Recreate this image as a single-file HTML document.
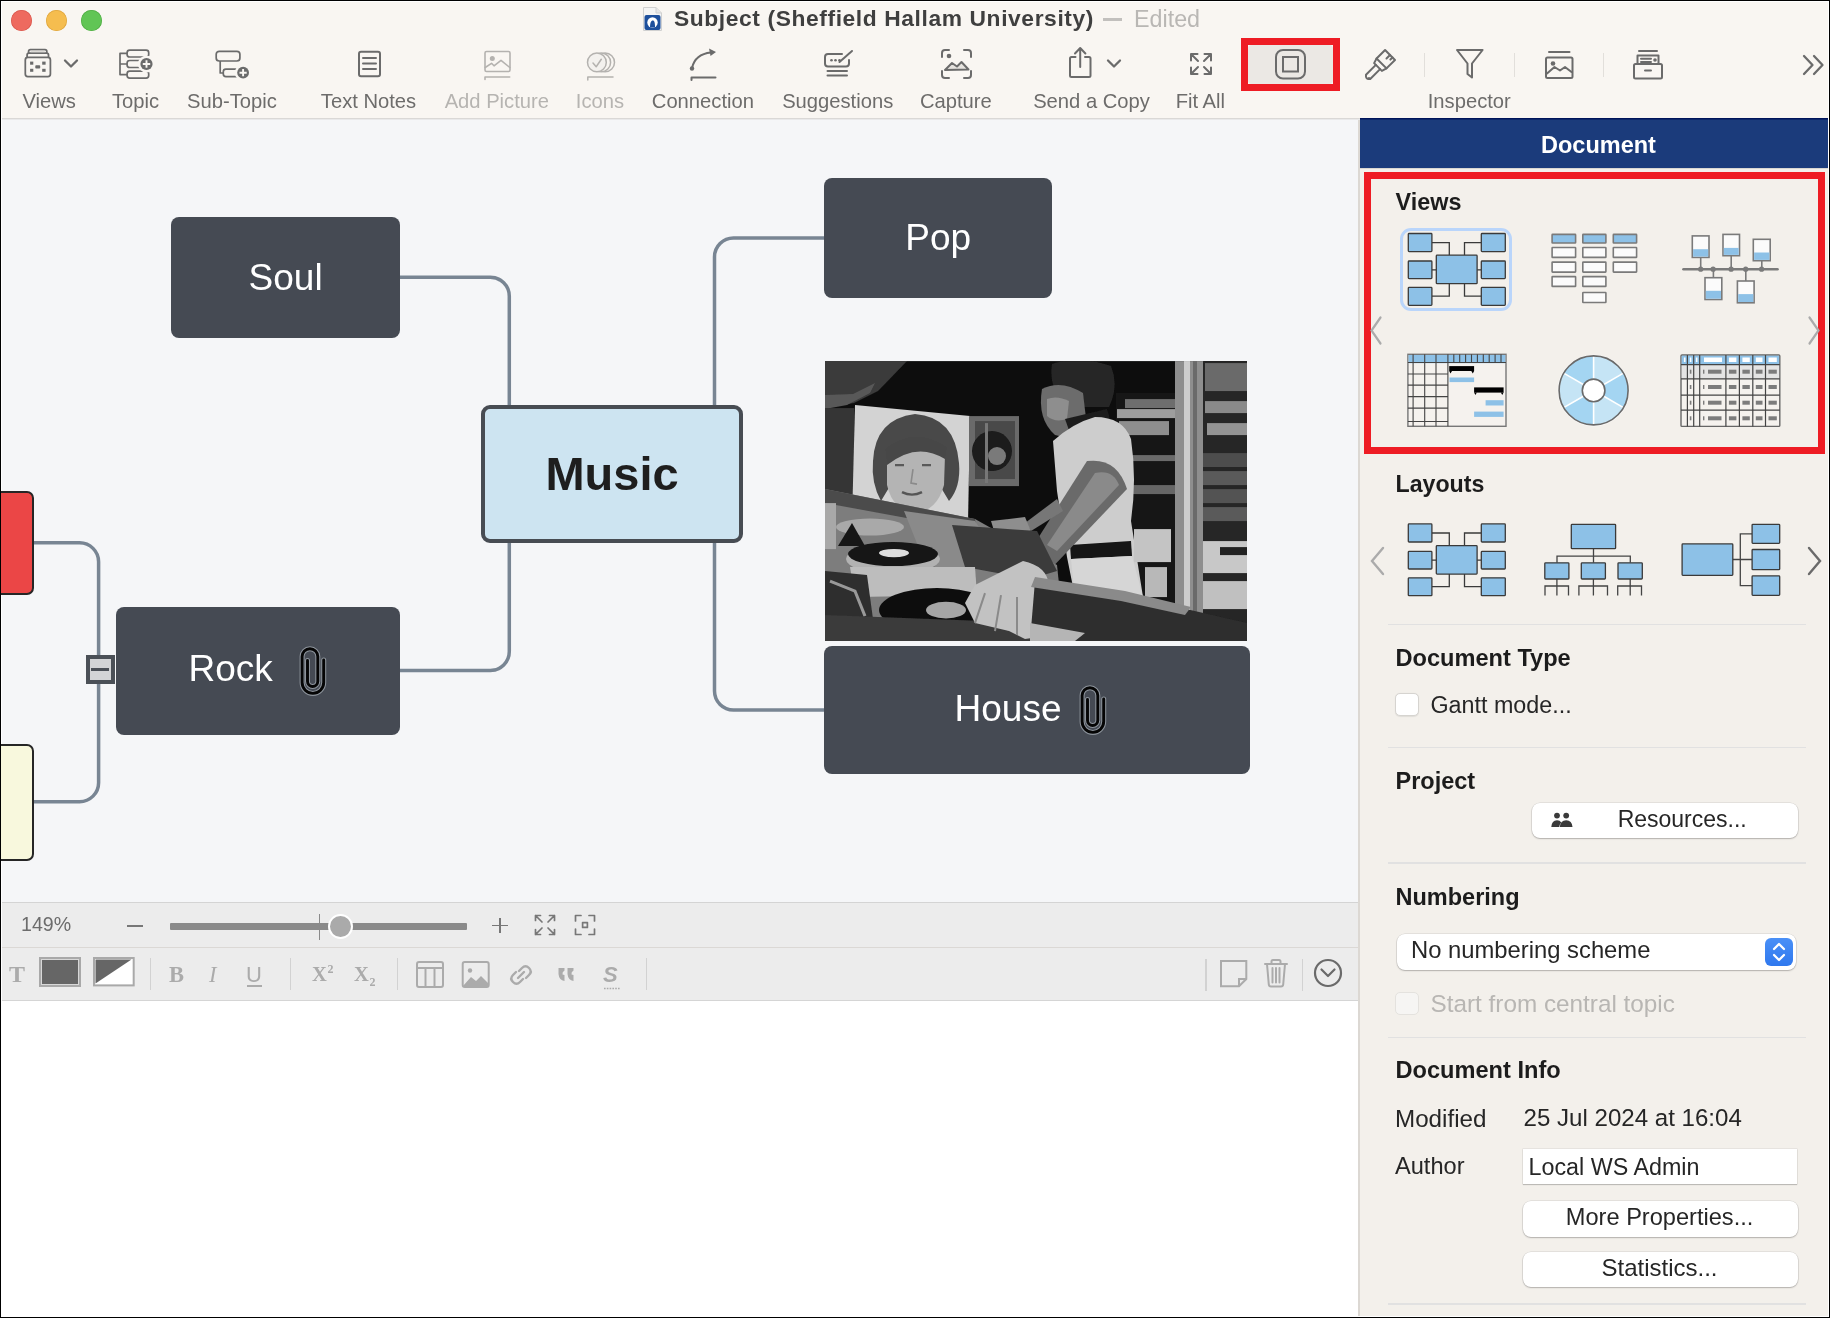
<!DOCTYPE html>
<html><head><meta charset="utf-8"><title>MindView</title>
<style>
html,body{margin:0;padding:0;}
body{width:1830px;height:1318px;overflow:hidden;background:#000;position:relative;font-family:"Liberation Sans",sans-serif;}
#win{position:absolute;left:1px;top:1px;width:1828px;height:1316px;background:#fff;overflow:hidden;}
#c{position:absolute;left:-1px;top:-1px;width:1830px;height:1318px;will-change:transform;}
</style></head><body><div id="win"><div id="c">
<div style="position:absolute;left:2px;top:2px;width:1826px;height:116px;background:#f9f6f2;"></div>
<div style="position:absolute;left:2px;top:118px;width:1826px;height:1px;background:#dad8d6;"></div>
<div style="position:absolute;left:2px;top:119px;width:1826px;height:1px;background:#e9e9ea;"></div>
<div style="position:absolute;left:10.6px;top:9.6px;width:21.2px;height:21.2px;border-radius:50%;background:#ee6a5f;box-shadow:inset 0 0 0 0.7px #d95a50;"></div>
<div style="position:absolute;left:45.7px;top:9.6px;width:21.2px;height:21.2px;border-radius:50%;background:#f5bd4f;box-shadow:inset 0 0 0 0.7px #dea640;"></div>
<div style="position:absolute;left:80.8px;top:9.6px;width:21.2px;height:21.2px;border-radius:50%;background:#61c555;box-shadow:inset 0 0 0 0.7px #52ad46;"></div>
<svg style="position:absolute;left:642px;top:6px;" width="21" height="26" viewBox="0 0 21 26"><path d="M1.5 1.5 H14 L19.5 7 V24.5 H1.5 Z" fill="#f4f4f4" stroke="#d0d0d0" stroke-width="1"/><path d="M14 1.5 V7 H19.5" fill="#e6e6e6" stroke="#d0d0d0" stroke-width="1"/><rect x="2.5" y="9" width="16" height="15" rx="2" fill="#1d4f9c"/><circle cx="10.5" cy="16.5" r="5.2" fill="#fff"/><path d="M8 21.5 C8 17 9 14.5 10.8 14.5 C12.5 14.5 13 17 13 21.5 Z" fill="#1d4f9c"/></svg>
<div style="position:absolute;top:6.27px;font-size:22.8px;line-height:25.47px;color:#3f3f3f;font-weight:700;white-space:pre;font-family:'Liberation Sans', sans-serif;letter-spacing:0.6px;left:674.00px;">Subject (Sheffield Hallam University)</div>
<div style="position:absolute;left:1102.6px;top:18.2px;width:19.4px;height:2.4px;background:#c2c0bd;"></div>
<div style="position:absolute;top:5.71px;font-size:23.3px;line-height:26.03px;color:#b9b7b4;font-weight:400;white-space:pre;font-family:'Liberation Sans', sans-serif;left:1134.00px;">Edited</div>
<svg style="position:absolute;left:20px;top:44px;" width="36" height="38" viewBox="0 0 36 38"><g stroke="#6b6b6b" stroke-width="1.75" fill="none" stroke-linejoin="round"><rect x="5.3" y="13.4" width="25.1" height="19.2" rx="2.5"/><path d="M7.1 13.4 V11 Q7.1 9.2 8.9 9.2 H26.7 Q28.5 9.2 28.5 11 V13.4"/><path d="M8.6 9.2 V7.3 Q8.6 5.5 10.4 5.5 H25 Q26.8 5.5 26.8 7.3 V9.2"/></g><rect x="10.6" y="6.6" width="14.2" height="1.6" fill="#dcdad6"/><g fill="#6b6b6b"><rect x="10.1" y="17.6" width="3.2" height="3.1"/><rect x="22.2" y="17.6" width="3.4" height="3.1"/><rect x="10.1" y="24.8" width="3.2" height="3"/><rect x="22.2" y="24.8" width="3.4" height="3"/><rect x="15.3" y="21.2" width="4.9" height="3.3" rx="0.8"/></g></svg>
<svg style="position:absolute;left:62px;top:57px;" width="18" height="14" viewBox="0 0 18 14"><path d="M3 3.5 L9 9.5 L15 3.5" stroke="#6b6b6b" stroke-width="2.3" fill="none" stroke-linecap="round" stroke-linejoin="round"/></svg>
<svg style="position:absolute;left:117px;top:47px;" width="38" height="34" viewBox="0 0 38 34"><g stroke="#6b6b6b" stroke-width="1.7" fill="none" stroke-linejoin="round"><rect x="10.1" y="3.1" width="21.6" height="6.9" rx="2.6"/><rect x="10.1" y="13.5" width="21" height="7" rx="2.6"/><rect x="10.1" y="24.1" width="21.6" height="7" rx="2.6"/><path d="M10.1 6.4 H3 V27.6 H10.1 M3 17 H10.1"/></g><circle cx="29.5" cy="17" r="8.6" fill="#f9f6f2"/><circle cx="29.5" cy="17" r="6.1" fill="#6b6b6b"/><path d="M29.5 13.3 V20.7 M25.8 17 H33.2" stroke="#f9f6f2" stroke-width="1.9"/></svg>
<svg style="position:absolute;left:212px;top:47px;" width="38" height="34" viewBox="0 0 38 34"><g stroke="#6b6b6b" stroke-width="1.7" fill="none" stroke-linejoin="round"><rect x="4.2" y="4.3" width="23.7" height="9.7" rx="3"/><path d="M8.2 14 V26 H11.3"/><rect x="11.3" y="22.2" width="20" height="7.4" rx="2.6"/></g><circle cx="31.1" cy="25.7" r="8.3" fill="#f9f6f2"/><circle cx="31.1" cy="25.7" r="5.9" fill="#6b6b6b"/><path d="M31.1 22.1 V29.3 M27.5 25.7 H34.7" stroke="#f9f6f2" stroke-width="1.9"/></svg>
<svg style="position:absolute;left:356px;top:49px;" width="27" height="30" viewBox="0 0 27 30"><g stroke="#6b6b6b" stroke-width="2" fill="none" stroke-linecap="round" stroke-linejoin="round"><rect x="3" y="2.8" width="21" height="24.5" rx="2"/><path d="M7 9 H20 M7 14.5 H20 M7 20 H20"/></g></svg>
<svg style="position:absolute;left:482px;top:49px;" width="31" height="33" viewBox="0 0 31 33"><g stroke="#b4b2af" stroke-width="1.6" fill="none" stroke-linecap="round" stroke-linejoin="round"><rect x="3" y="2.5" width="25" height="20" rx="1.5"/><path d="M3.2 18.5 L9.5 14.3 L12 16.8 L19 11.3 L27.8 18.5"/><path d="M3 30.5 V28 H27.7"/></g><circle cx="10.3" cy="9.4" r="2.5" fill="#b4b2af"/></svg>
<svg style="position:absolute;left:585px;top:49px;" width="32" height="33" viewBox="0 0 32 33"><g stroke="#b4b2af" stroke-width="1.5" fill="none" stroke-linecap="round" stroke-linejoin="round"><circle cx="20.1" cy="13.4" r="9.4"/><circle cx="16.2" cy="13.4" r="9.4" fill="#f9f6f2"/><circle cx="11.9" cy="13.4" r="9.4" fill="#f3f1ee"/><path d="M8 14 L11.2 17.7 L16.3 10.3"/><path d="M2.8 31 V28 H28"/></g></svg>
<svg style="position:absolute;left:687px;top:47px;" width="33" height="36" viewBox="0 0 33 36"><g stroke="#6b6b6b" stroke-width="2" fill="none" stroke-linecap="round" stroke-linejoin="round"><path d="M5 21 C7 12 14 6.5 24 5.5"/><path d="M4.5 33 V30.5 H28.5"/></g><circle cx="5" cy="21.5" r="2.2" fill="#6b6b6b"/><path d="M29 5 L22 1.5 L23.5 9 Z" fill="#6b6b6b"/></svg>
<svg style="position:absolute;left:822px;top:48px;" width="34" height="31" viewBox="0 0 34 31"><g stroke="#6b6b6b" stroke-width="2" fill="none" stroke-linecap="round" stroke-linejoin="round"><path d="M20 6 H6 Q3 6 3 9 V15.5 Q3 18.5 6 18.5 H24 Q27 18.5 27 15.5 V12"/><path d="M17.5 14 L30 3"/><path d="M5.5 23 H25 M5.5 27.5 H25"/></g><g fill="#6b6b6b"><circle cx="9.5" cy="12.3" r="1.3"/><circle cx="13.5" cy="12.3" r="1.3"/><circle cx="17.5" cy="12.3" r="1.3"/></g></svg>
<svg style="position:absolute;left:939px;top:47px;" width="35" height="34" viewBox="0 0 35 34"><g stroke="#6b6b6b" stroke-width="2" fill="none" stroke-linecap="round" stroke-linejoin="round"><path d="M3 10 V6 Q3 3 6 3 H10 M25 3 H29 Q32 3 32 6 V10 M32 24 V28 Q32 31 29 31 H25 M10 31 H6 Q3 31 3 28 V24"/><path d="M6 23 L13 16 L18 19.5 L22.5 15 L29.5 22.5 Z" fill="#e6e3df"/></g><circle cx="10" cy="9" r="2.3" fill="#6b6b6b"/></svg>
<svg style="position:absolute;left:1067px;top:45px;" width="28" height="35" viewBox="0 0 28 35"><g stroke="#6b6b6b" stroke-width="2" fill="none" stroke-linecap="round" stroke-linejoin="round"><path d="M8.5 12 H4.5 Q3 12 3 13.5 V30.5 Q3 32 4.5 32 H22 Q23.5 32 23.5 30.5 V13.5 Q23.5 12 22 12 H18"/><path d="M13.2 22 V3.5 M8 8.5 L13.2 3 L18.4 8.5"/></g></svg>
<svg style="position:absolute;left:1105px;top:57px;" width="18" height="14" viewBox="0 0 18 14"><path d="M3 3.5 L9 9.5 L15 3.5" stroke="#6b6b6b" stroke-width="2.3" fill="none" stroke-linecap="round" stroke-linejoin="round"/></svg>
<svg style="position:absolute;left:1188px;top:51px;" width="26" height="26" viewBox="0 0 26 26"><g stroke="#6b6b6b" stroke-width="2" fill="none" stroke-linecap="round" stroke-linejoin="round"><path d="M3 3 L10 10 M3 3 H9.5 M3 3 V9.5"/><path d="M23 3 L16 10 M23 3 H16.5 M23 3 V9.5"/><path d="M3 23 L10 16 M3 23 H9.5 M3 23 V16.5"/><path d="M23 23 L16 16 M23 23 H16.5 M23 23 V16.5"/></g></svg>
<div style="position:absolute;left:1247.5px;top:45px;width:85px;height:39px;background:#ebe8e4;border-radius:4px;"></div>
<div style="position:absolute;left:1240.5px;top:38px;width:99px;height:53px;box-sizing:border-box;border:7px solid #ee1c24;"></div>
<svg style="position:absolute;left:1273px;top:47px;" width="35" height="34" viewBox="0 0 35 34"><g stroke="#6b6b6b" stroke-width="2" fill="none"><rect x="3" y="3" width="29" height="28.5" rx="7"/><rect x="10" y="10" width="15" height="14.5"/></g></svg>
<svg style="position:absolute;left:1360px;top:48px;" width="36" height="38" viewBox="0 0 36 38"><g transform="rotate(45 18 19)" stroke="#6b6b6b" stroke-width="2" fill="none" stroke-linejoin="round" stroke-linecap="round"><path d="M11 2 H25 V14 H11 Z"/><path d="M11 14 L12.5 19 H23.5 L25 14"/><path d="M15 19 V33 Q18 37 21 33 V19"/><path d="M18 2 V7 M21.5 2 V5"/></g><circle cx="9" cy="30.5" r="1.5" fill="#6b6b6b"/></svg>
<div style="position:absolute;left:1424.1px;top:52.5px;width:1px;height:24px;background:#e2dfdb;"></div>
<div style="position:absolute;left:1513.5px;top:52.5px;width:1px;height:24px;background:#e2dfdb;"></div>
<div style="position:absolute;left:1603.1px;top:52.5px;width:1px;height:24px;background:#e2dfdb;"></div>
<svg style="position:absolute;left:1454px;top:47px;" width="32" height="34" viewBox="0 0 32 34"><path d="M3 3 H28.6 L18 16.5 V30.5 L13.5 27 V16.5 Z" stroke="#6b6b6b" stroke-width="2" fill="none" stroke-linecap="round" stroke-linejoin="round"/></svg>
<svg style="position:absolute;left:1543px;top:49px;" width="32" height="32" viewBox="0 0 32 32"><g stroke="#6b6b6b" stroke-width="2" fill="none" stroke-linecap="round" stroke-linejoin="round"><rect x="3" y="8.5" width="26.5" height="20.5" rx="1.5"/><path d="M6 3 H26.5"/><path d="M4 24.5 L11.5 18 L17 21.5 L22 18 L28.5 23"/></g><circle cx="10" cy="14.5" r="2.3" fill="#6b6b6b"/></svg>
<svg style="position:absolute;left:1631px;top:48px;" width="34" height="33" viewBox="0 0 34 33"><g stroke="#6b6b6b" stroke-width="2" fill="none" stroke-linecap="round" stroke-linejoin="round"><path d="M6.5 16 V7.5 H27.5 V16"/><path d="M8 3 H26"/><rect x="3" y="16" width="28" height="14.5" rx="1.5"/><path d="M10 10.8 H20 M10 14 H20 M14 22.5 H20"/></g><circle cx="24" cy="12" r="1.8" fill="#6b6b6b"/></svg>
<svg style="position:absolute;left:1800px;top:52px;" width="26" height="26" viewBox="0 0 26 26"><g stroke="#6b6b6b" stroke-width="2.3" fill="none" stroke-linecap="round" stroke-linejoin="round"><path d="M4 4 L12.5 13 L4 22"/><path d="M14 4 L22.5 13 L14 22"/></g></svg>
<div style="position:absolute;top:89.62px;font-size:20.2px;line-height:22.56px;color:#6d6c6b;font-weight:400;white-space:pre;font-family:'Liberation Sans', sans-serif;left:-450.80px;width:1000px;text-align:center;">Views</div>
<div style="position:absolute;top:89.62px;font-size:20.2px;line-height:22.56px;color:#6d6c6b;font-weight:400;white-space:pre;font-family:'Liberation Sans', sans-serif;left:-364.40px;width:1000px;text-align:center;">Topic</div>
<div style="position:absolute;top:89.62px;font-size:20.2px;line-height:22.56px;color:#6d6c6b;font-weight:400;white-space:pre;font-family:'Liberation Sans', sans-serif;left:-268.00px;width:1000px;text-align:center;">Sub-Topic</div>
<div style="position:absolute;top:89.62px;font-size:20.2px;line-height:22.56px;color:#6d6c6b;font-weight:400;white-space:pre;font-family:'Liberation Sans', sans-serif;left:-131.50px;width:1000px;text-align:center;">Text Notes</div>
<div style="position:absolute;top:89.62px;font-size:20.2px;line-height:22.56px;color:#b6b4b1;font-weight:400;white-space:pre;font-family:'Liberation Sans', sans-serif;left:-3.20px;width:1000px;text-align:center;">Add Picture</div>
<div style="position:absolute;top:89.62px;font-size:20.2px;line-height:22.56px;color:#b6b4b1;font-weight:400;white-space:pre;font-family:'Liberation Sans', sans-serif;left:100.00px;width:1000px;text-align:center;">Icons</div>
<div style="position:absolute;top:89.62px;font-size:20.2px;line-height:22.56px;color:#6d6c6b;font-weight:400;white-space:pre;font-family:'Liberation Sans', sans-serif;left:202.90px;width:1000px;text-align:center;">Connection</div>
<div style="position:absolute;top:89.62px;font-size:20.2px;line-height:22.56px;color:#6d6c6b;font-weight:400;white-space:pre;font-family:'Liberation Sans', sans-serif;left:337.70px;width:1000px;text-align:center;">Suggestions</div>
<div style="position:absolute;top:89.62px;font-size:20.2px;line-height:22.56px;color:#6d6c6b;font-weight:400;white-space:pre;font-family:'Liberation Sans', sans-serif;left:455.90px;width:1000px;text-align:center;">Capture</div>
<div style="position:absolute;top:89.62px;font-size:20.2px;line-height:22.56px;color:#6d6c6b;font-weight:400;white-space:pre;font-family:'Liberation Sans', sans-serif;left:591.50px;width:1000px;text-align:center;">Send a Copy</div>
<div style="position:absolute;top:89.62px;font-size:20.2px;line-height:22.56px;color:#6d6c6b;font-weight:400;white-space:pre;font-family:'Liberation Sans', sans-serif;left:700.40px;width:1000px;text-align:center;">Fit All</div>
<div style="position:absolute;top:89.62px;font-size:20.2px;line-height:22.56px;color:#6d6c6b;font-weight:400;white-space:pre;font-family:'Liberation Sans', sans-serif;left:969.30px;width:1000px;text-align:center;">Inspector</div>
<div style="position:absolute;left:2px;top:120px;width:1356px;height:782px;background:#f5f6f8;"></div>
<svg style="position:absolute;left:0px;top:0px;" width="1360" height="902" viewBox="0 0 1360 902"><path d="M400 277.2 H490.3 A19 19 0 0 1 509.3 296.2 V406" fill="none" stroke="#788593" stroke-width="3.5"/><path d="M824 238 H733.5 A19 19 0 0 0 714.5 257 V406" fill="none" stroke="#788593" stroke-width="3.5"/><path d="M509.3 543 V651.6 A19 19 0 0 1 490.3 670.6 H400" fill="none" stroke="#788593" stroke-width="3.5"/><path d="M714.5 543 V691 A19 19 0 0 0 733.5 710 H824" fill="none" stroke="#788593" stroke-width="3.5"/><path d="M34 542.8 H79.6 A19 19 0 0 1 98.6 561.8 V782.7 A19 19 0 0 1 79.6 801.7 H34" fill="none" stroke="#788593" stroke-width="3.5"/></svg>
<div style="position:absolute;left:171.2px;top:216.7px;width:228.8px;height:121px;background:#454a53;border-radius:8px;"></div>
<div style="position:absolute;top:256.62px;font-size:37px;line-height:41.33px;color:#ffffff;font-weight:400;white-space:pre;font-family:'Liberation Sans', sans-serif;left:-214.40px;width:1000px;text-align:center;">Soul</div>
<div style="position:absolute;left:824px;top:177.6px;width:228.4px;height:120.4px;background:#454a53;border-radius:8px;"></div>
<div style="position:absolute;top:216.81px;font-size:37px;line-height:41.33px;color:#ffffff;font-weight:400;white-space:pre;font-family:'Liberation Sans', sans-serif;left:438.20px;width:1000px;text-align:center;">Pop</div>
<div style="position:absolute;left:481.1px;top:405.4px;width:261.8px;height:138px;box-sizing:border-box;background:#cde4f1;border:4px solid #474c53;border-radius:9px;"></div>
<div style="position:absolute;top:447.66px;font-size:47px;line-height:52.50px;color:#1e1e1e;font-weight:700;white-space:pre;font-family:'Liberation Sans', sans-serif;left:112.00px;width:1000px;text-align:center;">Music</div>
<div style="position:absolute;left:116.2px;top:606.6px;width:283.8px;height:128.4px;background:#454a53;border-radius:8px;"></div>
<div style="position:absolute;top:648.31px;font-size:37px;line-height:41.33px;color:#ffffff;font-weight:400;white-space:pre;font-family:'Liberation Sans', sans-serif;left:-269.40px;width:1000px;text-align:center;">Rock</div>
<div style="position:absolute;left:823.9px;top:646.1px;width:425.9px;height:128px;background:#454a53;border-radius:8px;"></div>
<div style="position:absolute;top:687.72px;font-size:37px;line-height:41.33px;color:#ffffff;font-weight:400;white-space:pre;font-family:'Liberation Sans', sans-serif;left:508.00px;width:1000px;text-align:center;">House</div>
<svg style="position:absolute;left:299px;top:644.7px;" width="28" height="52" viewBox="0 0 28 52"><path d="M21.7 12 V34.6 A10.8 10.8 0 0 1 0.1 34.6 V8.55 A7.85 7.85 0 0 1 15.8 8.55 V33.35 A5.15 5.15 0 0 1 5.5 33.35 V12.5" fill="none" stroke="#8d949c" stroke-width="5" stroke-linecap="round" transform="translate(3 3)"/><path d="M21.7 12 V34.6 A10.8 10.8 0 0 1 0.1 34.6 V8.55 A7.85 7.85 0 0 1 15.8 8.55 V33.35 A5.15 5.15 0 0 1 5.5 33.35 V12.5" fill="none" stroke="#050505" stroke-width="2.9" stroke-linecap="round" transform="translate(3 3)"/></svg>
<svg style="position:absolute;left:1079px;top:684px;" width="28" height="52" viewBox="0 0 28 52"><path d="M21.7 12 V34.6 A10.8 10.8 0 0 1 0.1 34.6 V8.55 A7.85 7.85 0 0 1 15.8 8.55 V33.35 A5.15 5.15 0 0 1 5.5 33.35 V12.5" fill="none" stroke="#8d949c" stroke-width="5" stroke-linecap="round" transform="translate(3 3)"/><path d="M21.7 12 V34.6 A10.8 10.8 0 0 1 0.1 34.6 V8.55 A7.85 7.85 0 0 1 15.8 8.55 V33.35 A5.15 5.15 0 0 1 5.5 33.35 V12.5" fill="none" stroke="#050505" stroke-width="2.9" stroke-linecap="round" transform="translate(3 3)"/></svg>
<div style="position:absolute;left:-10px;top:491.2px;width:44px;height:104.1px;box-sizing:border-box;background:#eb4646;border:2px solid #262626;border-radius:7px;"></div>
<div style="position:absolute;left:-10px;top:744px;width:44px;height:116.9px;box-sizing:border-box;background:#f8f8dd;border:2px solid #262626;border-radius:7px;"></div>
<div style="position:absolute;left:85.6px;top:654.5px;width:29.1px;height:29.5px;box-sizing:border-box;background:#d3d4d6;border:4px solid #4b5057;"></div>
<div style="position:absolute;left:91px;top:667.5px;width:18px;height:3.5px;background:#4b5057;"></div>
<svg style="position:absolute;left:825px;top:361.2px;" width="422" height="280.2" viewBox="0 0 422 280">
<defs><filter id="pb" x="-5%" y="-5%" width="110%" height="110%"><feGaussianBlur stdDeviation="0.7"/></filter></defs>
<rect width="422" height="280" fill="#0d0d0d"/>
<g filter="url(#pb)">
<path d="M0 0 H82 L53 30 L29 42 L0 47 Z" fill="#3a3a3a"/>
<path d="M0 34 L28 33 L50 22 L45 32 L22 44 L0 48 Z" fill="#585858"/>
<rect x="0" y="47" width="29" height="90" fill="#343434"/>
<path d="M30 44 L145 55 L143 162 L27 160 Z" fill="#d3d3d3"/>
<path d="M48 100 Q50 58 90 53 Q130 56 134 102 Q136 126 124 140 L112 120 L68 120 L56 140 Q46 122 48 100 Z" fill="#4a4a4a"/>
<path d="M62 94 Q90 74 120 94 L119 124 Q112 150 90 152 Q68 150 62 124 Z" fill="#b4b4b4"/>
<path d="M60 88 Q90 64 122 86 L120 98 Q92 80 62 104 Z" fill="#474747"/>
<path d="M70 104 H79 M97 104 H106" stroke="#5a5a5a" stroke-width="2.2"/><path d="M88 108 L86 122 L92 123" stroke="#8a8a8a" stroke-width="1.6" fill="none"/>
<path d="M77 131 Q87 136 97 131" stroke="#555" stroke-width="2.4" fill="none"/>
<rect x="144" y="55" width="50" height="70" fill="#6a6a6a"/>
<rect x="150" y="60" width="40" height="58" fill="#4a4a4a"/>
<circle cx="167" cy="90" r="20" fill="#1a1a1a"/>
<circle cx="172" cy="95" r="9" fill="#7a7a7a"/>
<rect x="160" y="62" width="3" height="60" fill="#777"/>
<rect x="291" y="32" width="60" height="220" fill="#161616"/>
<rect x="300" y="38" width="54" height="9" fill="#6e6e6e"/>
<rect x="292" y="48" width="66" height="9" fill="#9e9e9e"/>
<rect x="294" y="60" width="50" height="14" fill="#8e8e8e"/>
<rect x="298" y="94" width="54" height="6" fill="#6a6a6a"/>
<rect x="305" y="124" width="46" height="9" fill="#666"/>
<rect x="350" y="0" width="29" height="254" fill="#8e8e8e"/>
<rect x="359" y="0" width="6" height="254" fill="#cdcdcd"/><rect x="368" y="0" width="4" height="254" fill="#6a6a6a"/>
<rect x="378" y="0" width="44" height="265" fill="#252525"/>
<rect x="380" y="2" width="42" height="28" fill="#6a6a6a"/>
<rect x="380" y="40" width="42" height="12" fill="#8a8a8a"/>
<rect x="382" y="62" width="40" height="12" fill="#939393"/>
<rect x="378" y="92" width="44" height="14" fill="#4e4e4e"/>
<rect x="378" y="110" width="44" height="14" fill="#5a5a5a"/>
<rect x="378" y="128" width="44" height="14" fill="#525252"/>
<rect x="378" y="146" width="44" height="14" fill="#5a5a5a"/>
<rect x="378" y="180" width="44" height="32" fill="#c8c8c8"/>
<rect x="395" y="186" width="27" height="8" fill="#222"/>
<rect x="378" y="220" width="44" height="28" fill="#c0c0c0"/>
<path d="M227 3 Q255 -6 286 5 Q294 25 284 46 L244 46 Q223 30 227 3 Z" fill="#272727"/>
<path d="M217 28 Q236 18 258 32 L262 66 Q248 80 230 74 Q212 58 217 28 Z" fill="#6c6c6c"/>
<path d="M222 38 Q232 34 244 40 L242 58 Q230 62 222 55 Z" fill="#8e8e8e"/>
<path d="M240 58 L282 48 L288 70 L250 86 Z" fill="#1e1e1e"/>
<path d="M228 80 Q248 62 270 56 Q298 56 306 78 Q312 118 306 160 L318 236 L250 236 L242 196 L232 130 Z" fill="#cdcdcd"/>
<path d="M245 184 L306 180 L307 195 L246 198 Z" fill="#121212"/>
<path d="M246 198 L307 195 L318 236 L250 236 Z" fill="#d6d6d6"/>
<rect x="309" y="168" width="37" height="33" fill="#c4c4c4"/>
<rect x="320" y="206" width="22" height="30" fill="#b8b8b8"/>
<path d="M262 100 Q292 96 302 128 L220 214 L196 204 Z" fill="#6a6a6a"/><path d="M270 112 Q288 108 294 124 L232 190 L222 184 Z" fill="#8a8a8a"/>
<path d="M238 150 L206 170 L200 162 L232 138 Z" fill="#777"/>
<path d="M166 160 L200 156 L210 180 L174 186 Z" fill="#8e8e8e"/>
<path d="M0 128 L150 158 L232 204 L240 280 L0 280 Z" fill="#7d7d7d"/>
<path d="M0 128 L150 158 L152 170 L0 142 Z" fill="#4c4c4c"/>
<rect x="0" y="142" width="11" height="46" fill="#a8a8a8"/>
<path d="M79 150 L150 160 L176 200 L114 210 L95 190 Z" fill="#8a8a8a"/>
<path d="M127 164 L212 170 L232 210 L205 218 L140 206 Z" fill="#3a3a3a"/>
<ellipse cx="45" cy="166" rx="34" ry="8.5" fill="#a9a9a9"/>
<path d="M13 185 L27 162 L40 185 Z" fill="#161616"/>
<ellipse cx="68" cy="198" rx="47" ry="15" fill="#b2b2b2"/>
<ellipse cx="68" cy="193" rx="45" ry="12" fill="#141414"/>
<ellipse cx="69" cy="192" rx="15" ry="4.2" fill="#dedede"/>
<path d="M25 206 L150 206 L152 234 L30 236 Z" fill="#bdbdbd"/>
<path d="M0 210 L42 214 L48 258 L0 258 Z" fill="#2e2e2e"/>
<path d="M5 220 L30 230 L40 255" stroke="#999" stroke-width="3" fill="none"/>
<ellipse cx="112" cy="249" rx="58" ry="22" fill="#0e0e0e"/>
<ellipse cx="121" cy="249" rx="20" ry="8.4" fill="#a5a5a5"/>
<path d="M0 254 L215 262 L215 280 L0 280 Z" fill="#3a3a3a"/>
<path d="M198 200 Q222 205 224 224 L214 276 L200 278 L184 270 L150 262 L140 242 L150 224 Z" fill="#c2c2c2"/>
<path d="M160 232 L150 262 M176 234 L170 270 M192 236 L192 274" stroke="#8a8a8a" stroke-width="2"/>
<path d="M210 220 L300 234 L422 262 L422 280 L205 280 Z" fill="#2e2e2e"/>
<path d="M210 216 L300 230 L366 246 L360 254 L296 240 L206 226 Z" fill="#8a8a8a"/>
<path d="M205 262 L260 272 L250 280 L205 280 Z" fill="#b5b5b5"/>
</g>
</svg>
<div style="position:absolute;left:2px;top:902px;width:1357px;height:1px;background:#d4d4d4;"></div>
<div style="position:absolute;left:2px;top:903px;width:1357px;height:44.5px;background:#ececec;"></div>
<div style="position:absolute;left:2px;top:947px;width:1357px;height:1.3px;background:#dbd8d5;"></div>
<div style="position:absolute;left:2px;top:948.3px;width:1357px;height:51.5px;background:#ececec;"></div>
<div style="position:absolute;left:2px;top:999.5px;width:1357px;height:1.5px;background:#d5d5d5;"></div>
<div style="position:absolute;left:2px;top:1001px;width:1357px;height:316px;background:#ffffff;"></div>
<div style="position:absolute;left:1358px;top:120px;width:1.6px;height:1197px;background:#dcd8d3;"></div>
<div style="position:absolute;top:914.46px;font-size:19.6px;line-height:21.89px;color:#6c6c6c;font-weight:400;white-space:pre;font-family:'Liberation Sans', sans-serif;left:21.00px;">149%</div>
<div style="position:absolute;left:127.3px;top:925px;width:15.4px;height:1.6px;background:#777777;"></div>
<div style="position:absolute;left:170px;top:922.9px;width:296.8px;height:7.1px;background:#8a8a8a;border-radius:1px;"></div>
<div style="position:absolute;left:318.7px;top:913.6px;width:1.2px;height:26px;background:#8a8a8a;"></div>
<div style="position:absolute;left:327.9px;top:914.1px;width:24.8px;height:24.8px;box-sizing:border-box;border-radius:50%;background:#aaaaaa;border:2px solid #fff;"></div>
<div style="position:absolute;left:492.4px;top:924.7px;width:15.2px;height:1.6px;background:#777777;"></div>
<div style="position:absolute;left:499.2px;top:917.9px;width:1.6px;height:15.2px;background:#777777;"></div>
<svg style="position:absolute;left:533px;top:912.7px;" width="24" height="24" viewBox="0 0 24 24"><g stroke="#777777" stroke-width="1.7" fill="none" stroke-linecap="round" stroke-linejoin="round"><path d="M2.5 2.5 L9 9 M2.5 2.5 H7.5 M2.5 2.5 V7.5 M21.5 2.5 L15 9 M21.5 2.5 H16.5 M21.5 2.5 V7.5 M2.5 21.5 L9 15 M2.5 21.5 H7.5 M2.5 21.5 V16.5 M21.5 21.5 L15 15 M21.5 21.5 H16.5 M21.5 21.5 V16.5"/></g></svg>
<svg style="position:absolute;left:572.5px;top:912.7px;" width="24" height="24" viewBox="0 0 24 24"><g stroke="#777777" stroke-width="1.7" fill="none" stroke-linecap="round" stroke-linejoin="round"><path d="M2.5 8 V2.5 H8 M16 2.5 H21.5 V8 M21.5 16 V21.5 H16 M8 21.5 H2.5 V16"/><rect x="9.6" y="9.6" width="4.8" height="4.8"/></g></svg>
<div style="position:absolute;top:960.58px;font-size:24px;line-height:26.81px;color:#ababab;font-weight:700;white-space:pre;font-family:'Liberation Serif', serif;left:9.00px;">T</div>
<div style="position:absolute;left:39px;top:957.2px;width:41.8px;height:29.4px;box-sizing:border-box;border:2px solid #a9a9a9;background:#666;box-shadow:inset 0 0 0 1px #d8d8d8;"></div>
<svg style="position:absolute;left:93.3px;top:957.2px;" width="41.7" height="29.4" viewBox="0 0 41.7 29.4"><rect x="1" y="1" width="39.7" height="27.4" fill="#fff" stroke="#a9a9a9" stroke-width="2"/><path d="M2.5 2.5 H38.5 L2.5 26.5 Z" fill="#666"/></svg>
<div style="position:absolute;left:149.5px;top:958px;width:1.3px;height:31.799999999999955px;background:#d2d2d2;"></div>
<div style="position:absolute;left:289.79999999999995px;top:958px;width:1.3px;height:31.799999999999955px;background:#d2d2d2;"></div>
<div style="position:absolute;left:396.79999999999995px;top:958px;width:1.3px;height:32.39999999999998px;background:#d2d2d2;"></div>
<div style="position:absolute;left:646.0px;top:958px;width:1.3px;height:32.39999999999998px;background:#d2d2d2;"></div>
<div style="position:absolute;left:1205.4px;top:959px;width:1.3px;height:32.39999999999998px;background:#d2d2d2;"></div>
<div style="position:absolute;left:1302.0px;top:959px;width:1.3px;height:32.39999999999998px;background:#d2d2d2;"></div>
<div style="position:absolute;top:961.94px;font-size:22.5px;line-height:25.13px;color:#ababab;font-weight:700;white-space:pre;font-family:'Liberation Serif', serif;left:169.00px;">B</div>
<div style="position:absolute;top:961.94px;font-size:22.5px;line-height:25.13px;color:#ababab;font-weight:400;white-space:pre;font-family:'Liberation Serif', serif;font-style:italic;left:209.00px;">I</div>
<div style="position:absolute;top:963.09px;font-size:22px;line-height:24.57px;color:#ababab;font-weight:400;white-space:pre;font-family:'Liberation Sans', sans-serif;left:246.00px;">U</div>
<div style="position:absolute;left:246.7px;top:985px;width:15.7px;height:2px;background:#ababab;"></div>
<div style="position:absolute;top:963.05px;font-size:20.5px;line-height:22.90px;color:#ababab;font-weight:700;white-space:pre;font-family:'Liberation Serif', serif;left:312.00px;">X</div>
<div style="position:absolute;top:963.14px;font-size:12px;line-height:13.40px;color:#ababab;font-weight:700;white-space:pre;font-family:'Liberation Serif', serif;left:327.50px;">2</div>
<div style="position:absolute;top:963.05px;font-size:20.5px;line-height:22.90px;color:#ababab;font-weight:700;white-space:pre;font-family:'Liberation Serif', serif;left:354.00px;">X</div>
<div style="position:absolute;top:976.14px;font-size:12px;line-height:13.40px;color:#ababab;font-weight:700;white-space:pre;font-family:'Liberation Serif', serif;left:369.50px;">2</div>
<svg style="position:absolute;left:414px;top:959.3px;" width="32" height="31" viewBox="0 0 32 31"><g stroke="#ababab" stroke-width="2" fill="none" stroke-linecap="round" stroke-linejoin="round"><rect x="3" y="3" width="26" height="25" rx="2"/><path d="M3 9 H29 M11.5 9 V28 M20.5 9 V28"/></g></svg>
<svg style="position:absolute;left:460px;top:959.3px;" width="32" height="31" viewBox="0 0 32 31"><rect x="2.7" y="3" width="26" height="25" rx="2" stroke="#ababab" stroke-width="2" fill="none"/><path d="M3 27 L11 18 L16 22 L21 17 L29 25 V28 H3 Z" fill="#ababab"/><circle cx="10" cy="11.5" r="2.2" fill="#ababab"/></svg>
<svg style="position:absolute;left:507px;top:961px;" width="29" height="28" viewBox="0 0 29 28"><g stroke="#ababab" stroke-width="2.4" fill="none" stroke-linecap="round"><path d="M12 10 L15 7 Q18.5 3.5 22 7 Q25.5 10.5 22 14 L19 17"/><path d="M16 18 L13 21 Q9.5 24.5 6 21 Q2.5 17.5 6 14 L9 11"/><path d="M11 17 L17 11"/></g></svg>
<svg style="position:absolute;left:556px;top:966px;" width="22" height="17" viewBox="0 0 22 17"><g fill="#ababab"><path d="M2.5 2 H8.5 V4.5 Q6 6 6.5 8.5 L8.5 9 V15 Q3 14 2.5 8 Z"/><path d="M11.5 2 H17.5 V4.5 Q15 6 15.5 8.5 L17.5 9 V15 Q12 14 11.5 8 Z"/></g></svg>
<div style="position:absolute;top:963.09px;font-size:22px;line-height:24.57px;color:#ababab;font-weight:700;white-space:pre;font-family:'Liberation Sans', sans-serif;font-style:italic;left:603.00px;">S</div>
<svg style="position:absolute;left:603px;top:986.5px;" width="18" height="3" viewBox="0 0 18 3"><path d="M1 1.5 H17" stroke="#ababab" stroke-width="1.3" stroke-dasharray="1.6 1.2"/></svg>
<svg style="position:absolute;left:1217.6px;top:957.5px;" width="32" height="32" viewBox="0 0 32 32"><path d="M3 3 H28.3 V21 L21 28.3 H3 Z" stroke="#ababab" stroke-width="2" fill="none" stroke-linejoin="miter"/><path d="M28.3 21 H21 V28.3" stroke="#ababab" stroke-width="2" fill="none"/></svg>
<svg style="position:absolute;left:1261.6px;top:957.5px;" width="28" height="32" viewBox="0 0 28 32"><g stroke="#ababab" stroke-width="2" fill="none" stroke-linecap="round" stroke-linejoin="round"><path d="M3 6 H25"/><path d="M9.5 5.5 V3.5 Q9.5 2 11 2 H17 Q18.5 2 18.5 3.5 V5.5"/><path d="M5 6 L6.8 26.5 Q7 28.5 9 28.5 H19 Q21 28.5 21.2 26.5 L23 6"/><path d="M10.5 10 V24.5 M14 10 V24.5 M17.5 10 V24.5"/></g></svg>
<svg style="position:absolute;left:1312px;top:957px;" width="32" height="32" viewBox="0 0 32 32"><circle cx="16" cy="16" r="13" stroke="#6a6a6a" stroke-width="2.2" fill="none"/><path d="M9.5 12.5 L16 19 L22.5 12.5" stroke="#6a6a6a" stroke-width="2.2" fill="none" stroke-linecap="round" stroke-linejoin="round"/></svg>
<div style="position:absolute;left:1359.6px;top:120px;width:470px;height:1198px;background:#f3f0eb;"></div>
<div style="position:absolute;left:1360.4px;top:118px;width:468px;height:49.6px;background:#1b3b7b;box-shadow:inset 0 1.5px 0 #00145a;"></div>
<div style="position:absolute;left:1360.4px;top:167.6px;width:468px;height:1.2px;background:#d9d6d1;"></div>
<div style="position:absolute;top:131.63px;font-size:23.5px;line-height:26.25px;color:#ffffff;font-weight:700;white-space:pre;font-family:'Liberation Sans', sans-serif;left:1098.50px;width:1000px;text-align:center;">Document</div>
<div style="position:absolute;left:1364.2px;top:172.2px;width:460.8px;height:281.4px;box-sizing:border-box;border:7px solid #ee1c24;"></div>
<div style="position:absolute;top:188.82px;font-size:23.4px;line-height:26.14px;color:#1c1c1c;font-weight:700;white-space:pre;font-family:'Liberation Sans', sans-serif;left:1395.50px;">Views</div>
<div style="position:absolute;left:1400.4px;top:227.7px;width:111.7px;height:83.1px;box-sizing:border-box;border:3px solid #b9d5fb;border-radius:11px;"></div>
<svg style="position:absolute;left:0px;top:0px;" width="1830" height="620" viewBox="0 0 1830 620"><path d="M1431.9 242.6 H1449.3 V255.2 M1481.3 242.6 H1464.5 V255.2 M1431.9 296.2 H1449.3 V283.7 M1481.3 296.2 H1464.5 V283.7 M1431.9 269.8 H1436.3 M1477.1 269.8 H1481.3" stroke="#3a3a3a" stroke-width="1.3" fill="none"/><rect x="1408.30" y="233.50" width="23.60" height="18.10" rx="0.8" fill="#8dc1e7" stroke="#3a3a3a" stroke-width="1.3"/><rect x="1408.30" y="261.00" width="23.60" height="17.60" rx="0.8" fill="#8dc1e7" stroke="#3a3a3a" stroke-width="1.3"/><rect x="1408.30" y="287.40" width="23.60" height="17.90" rx="0.8" fill="#8dc1e7" stroke="#3a3a3a" stroke-width="1.3"/><rect x="1481.30" y="233.50" width="24.00" height="18.10" rx="0.8" fill="#8dc1e7" stroke="#3a3a3a" stroke-width="1.3"/><rect x="1481.30" y="261.00" width="24.00" height="17.60" rx="0.8" fill="#8dc1e7" stroke="#3a3a3a" stroke-width="1.3"/><rect x="1481.30" y="287.40" width="24.00" height="17.90" rx="0.8" fill="#8dc1e7" stroke="#3a3a3a" stroke-width="1.3"/><rect x="1436.30" y="255.20" width="40.80" height="28.50" rx="0.8" fill="#8dc1e7" stroke="#3a3a3a" stroke-width="1.3"/><rect x="1552.10" y="234.40" width="23.50" height="8.60" rx="0.5" fill="#8dc1e7" stroke="#7a7a7a" stroke-width="1.6"/><rect x="1552.10" y="247.50" width="23.50" height="9.90" rx="0.5" fill="#fbfbfb" stroke="#7a7a7a" stroke-width="1.6"/><rect x="1552.10" y="262.10" width="23.50" height="10.00" rx="0.5" fill="#fbfbfb" stroke="#7a7a7a" stroke-width="1.6"/><rect x="1552.10" y="276.60" width="23.50" height="9.80" rx="0.5" fill="#fbfbfb" stroke="#7a7a7a" stroke-width="1.6"/><rect x="1582.80" y="234.40" width="23.10" height="8.60" rx="0.5" fill="#8dc1e7" stroke="#7a7a7a" stroke-width="1.6"/><rect x="1582.80" y="247.50" width="23.10" height="9.90" rx="0.5" fill="#fbfbfb" stroke="#7a7a7a" stroke-width="1.6"/><rect x="1582.80" y="262.10" width="23.10" height="10.00" rx="0.5" fill="#fbfbfb" stroke="#7a7a7a" stroke-width="1.6"/><rect x="1582.80" y="276.60" width="23.10" height="9.80" rx="0.5" fill="#fbfbfb" stroke="#7a7a7a" stroke-width="1.6"/><rect x="1582.80" y="292.50" width="23.10" height="10.00" rx="0.5" fill="#fbfbfb" stroke="#7a7a7a" stroke-width="1.6"/><rect x="1613.30" y="234.40" width="23.30" height="8.60" rx="0.5" fill="#8dc1e7" stroke="#7a7a7a" stroke-width="1.6"/><rect x="1613.30" y="247.50" width="23.30" height="9.90" rx="0.5" fill="#fbfbfb" stroke="#7a7a7a" stroke-width="1.6"/><rect x="1613.30" y="262.10" width="23.30" height="10.00" rx="0.5" fill="#fbfbfb" stroke="#7a7a7a" stroke-width="1.6"/><path d="M1683.5 269.2 H1777.5" stroke="#7a7a7a" stroke-width="2.6" stroke-linecap="round"/><path d="M1700.7 257.4 V269.2" stroke="#7a7a7a" stroke-width="1.6"/><path d="M1731.2 255.7 V269.2" stroke="#7a7a7a" stroke-width="1.6"/><path d="M1761.8 260.7 V269.2" stroke="#7a7a7a" stroke-width="1.6"/><path d="M1713.4 277.7 V269.2" stroke="#7a7a7a" stroke-width="1.6"/><path d="M1745.8 281 V269.2" stroke="#7a7a7a" stroke-width="1.6"/><rect x="1692.3" y="235.9" width="16.7" height="21.5" fill="#fbfbfb" stroke="#7a7a7a" stroke-width="1.6"/><rect x="1693.1" y="249.2" width="15.1" height="7.4" fill="#8dc1e7"/><rect x="1723" y="234.4" width="16.5" height="21.3" fill="#fbfbfb" stroke="#7a7a7a" stroke-width="1.6"/><rect x="1723.8" y="247.9" width="14.9" height="7.0" fill="#8dc1e7"/><rect x="1753.3" y="239.3" width="16.9" height="21.4" fill="#fbfbfb" stroke="#7a7a7a" stroke-width="1.6"/><rect x="1754.1" y="252.5" width="15.3" height="7.4" fill="#8dc1e7"/><rect x="1705" y="277.7" width="16.8" height="21.8" fill="#fbfbfb" stroke="#7a7a7a" stroke-width="1.6"/><rect x="1705.8" y="290.8" width="15.2" height="7.9" fill="#8dc1e7"/><rect x="1737.4" y="281" width="16.7" height="21.8" fill="#fbfbfb" stroke="#7a7a7a" stroke-width="1.6"/><rect x="1738.2" y="294.1" width="15.1" height="7.9" fill="#8dc1e7"/><circle cx="1700.7" cy="269.2" r="2.6" fill="#7a7a7a"/><circle cx="1713.1" cy="269.2" r="2.6" fill="#7a7a7a"/><circle cx="1731.1" cy="269.2" r="2.6" fill="#7a7a7a"/><circle cx="1745.7" cy="269.2" r="2.6" fill="#7a7a7a"/><circle cx="1761.6" cy="269.2" r="2.6" fill="#7a7a7a"/><rect x="1407.9" y="354.3" width="98.1" height="72.0" fill="#f5f2ee" stroke="#777" stroke-width="1.4"/><rect x="1408.6000000000001" y="355.0" width="96.7" height="8.2" fill="#8dc1e7"/><path d="M1407.9 362.5 H1506 M1413.1 354.3 V426.3 M1424.7 354.3 V426.3 M1436 354.3 V426.3 M1447.9 354.3 V426.3 M1407.9 374 H1447.9 M1407.9 385.1 H1447.9 M1407.9 396.6 H1447.9 M1407.9 408.1 H1447.9 M1407.9 421.5 H1447.9 M1453.8 354.3 V362.5 M1459.7 354.3 V362.5 M1465.6 354.3 V362.5 M1471.5 354.3 V362.5 M1477.4 354.3 V362.5 M1483.3 354.3 V362.5 M1489.2 354.3 V362.5 M1495.1 354.3 V362.5 M1501.0 354.3 V362.5 " stroke="#444" stroke-width="1.1" fill="none"/><rect x="1449.2" y="366.1" width="24.9" height="4.9" fill="#000"/><rect x="1474.1" y="387.4" width="29.5" height="5.2" fill="#000"/><path d="M1449.2 371 L1450.5 373.5 L1452 371 M1474.1 371 L1472.8 373.5 L1471.3 371 M1474.1 392.6 L1475.4 395 L1476.9 392.6 M1503.6 392.6 L1502.3 395 L1500.8 392.6" fill="#000"/><rect x="1449.5" y="377.5" width="24.6" height="4.6" fill="#8dc1e7"/><rect x="1485.6" y="400.2" width="18" height="5.3" fill="#8dc1e7"/><rect x="1474.1" y="411.6" width="29.5" height="5.3" fill="#8dc1e7"/><circle cx="1593.6" cy="390.4" r="36.0" fill="#fff" opacity="0.6"/><path d="M1593.60 355.90 A34.5 34.5 0 0 1 1623.48 373.15 L1603.39 384.75 A11.3 11.3 0 0 0 1593.60 379.10 Z" fill="#c5e4f5"/><path d="M1623.48 373.15 A34.5 34.5 0 0 1 1623.48 407.65 L1603.39 396.05 A11.3 11.3 0 0 0 1603.39 384.75 Z" fill="#a4d5f2"/><path d="M1623.48 407.65 A34.5 34.5 0 0 1 1593.60 424.90 L1593.60 401.70 A11.3 11.3 0 0 0 1603.39 396.05 Z" fill="#c5e4f5"/><path d="M1593.60 424.90 A34.5 34.5 0 0 1 1563.72 407.65 L1583.81 396.05 A11.3 11.3 0 0 0 1593.60 401.70 Z" fill="#a4d5f2"/><path d="M1563.72 407.65 A34.5 34.5 0 0 1 1563.72 373.15 L1583.81 384.75 A11.3 11.3 0 0 0 1583.81 396.05 Z" fill="#c5e4f5"/><path d="M1563.72 373.15 A34.5 34.5 0 0 1 1593.60 355.90 L1593.60 379.10 A11.3 11.3 0 0 0 1583.81 384.75 Z" fill="#a4d5f2"/><path d="M1593.60 379.10 L1593.60 355.90" stroke="#fff" stroke-width="1.6"/><path d="M1603.39 384.75 L1623.48 373.15" stroke="#fff" stroke-width="1.6"/><path d="M1603.39 396.05 L1623.48 407.65" stroke="#fff" stroke-width="1.6"/><path d="M1593.60 401.70 L1593.60 424.90" stroke="#fff" stroke-width="1.6"/><path d="M1583.81 396.05 L1563.72 407.65" stroke="#fff" stroke-width="1.6"/><path d="M1583.81 384.75 L1563.72 373.15" stroke="#fff" stroke-width="1.6"/><circle cx="1593.6" cy="390.4" r="34.5" fill="none" stroke="#6a6a6a" stroke-width="1.6"/><circle cx="1593.6" cy="390.4" r="11.3" fill="#fff" stroke="#6a6a6a" stroke-width="1.6"/><rect x="1681" y="355" width="98.8" height="71.4" fill="#f5f2ee" stroke="#666" stroke-width="1.4" rx="1"/><rect x="1681.7" y="355.7" width="97.4" height="9.6" fill="#8dc1e7"/><rect x="1681.7" y="364.6" width="97.4" height="14.2" fill="#e4e4e4"/><path d="M1687.4 355 V426.4 M1693.7 355 V426.4 M1699.7 355 V426.4 M1725.9 355 V426.4 M1739.4 355 V426.4 M1752.8 355 V426.4 M1765.5 355 V426.4 M1681 364.6 H1779.8 M1681 378.8 H1779.8 M1681 395.2 H1779.8 M1681 410.2 H1779.8 " stroke="#444" stroke-width="1.2" fill="none"/><rect x="1683.9" y="357.5" width="1.6" height="4.5" fill="#fff"/><rect x="1689.8" y="357.5" width="1.6" height="4.5" fill="#fff"/><rect x="1695.9" y="357.5" width="1.6" height="4.5" fill="#fff"/><rect x="1704" y="357.5" width="18" height="4.5" fill="#fff"/><rect x="1728.9" y="357.5" width="7.5" height="4.5" fill="#fff"/><rect x="1742.4" y="357.5" width="7.4" height="4.5" fill="#fff"/><rect x="1755.8" y="357.5" width="6.7" height="4.5" fill="#fff"/><rect x="1768.5" y="357.5" width="8.3" height="4.5" fill="#fff"/><rect x="1689.8" y="369.7" width="1.6" height="4" fill="#7c7c7c"/><rect x="1703" y="369.7" width="1.4" height="4" fill="#7c7c7c"/><rect x="1708" y="369.7" width="13.5" height="4" fill="#7c7c7c"/><rect x="1728.9" y="369.7" width="7.5" height="4" fill="#7c7c7c"/><rect x="1742.4" y="369.7" width="7.4" height="4" fill="#7c7c7c"/><rect x="1755.8" y="369.7" width="6.7" height="4" fill="#7c7c7c"/><rect x="1768.5" y="369.7" width="8.3" height="4" fill="#7c7c7c"/><rect x="1689.8" y="385.0" width="1.6" height="4" fill="#7c7c7c"/><rect x="1703" y="385.0" width="1.4" height="4" fill="#7c7c7c"/><rect x="1708" y="385.0" width="13.5" height="4" fill="#7c7c7c"/><rect x="1728.9" y="385.0" width="7.5" height="4" fill="#7c7c7c"/><rect x="1742.4" y="385.0" width="7.4" height="4" fill="#7c7c7c"/><rect x="1755.8" y="385.0" width="6.7" height="4" fill="#7c7c7c"/><rect x="1768.5" y="385.0" width="8.3" height="4" fill="#7c7c7c"/><rect x="1689.8" y="400.7" width="1.6" height="4" fill="#7c7c7c"/><rect x="1703" y="400.7" width="1.4" height="4" fill="#7c7c7c"/><rect x="1708" y="400.7" width="13.5" height="4" fill="#7c7c7c"/><rect x="1728.9" y="400.7" width="7.5" height="4" fill="#7c7c7c"/><rect x="1742.4" y="400.7" width="7.4" height="4" fill="#7c7c7c"/><rect x="1755.8" y="400.7" width="6.7" height="4" fill="#7c7c7c"/><rect x="1768.5" y="400.7" width="8.3" height="4" fill="#7c7c7c"/><rect x="1689.8" y="416.3" width="1.6" height="4" fill="#7c7c7c"/><rect x="1703" y="416.3" width="1.4" height="4" fill="#7c7c7c"/><rect x="1708" y="416.3" width="13.5" height="4" fill="#7c7c7c"/><rect x="1728.9" y="416.3" width="7.5" height="4" fill="#7c7c7c"/><rect x="1742.4" y="416.3" width="7.4" height="4" fill="#7c7c7c"/><rect x="1755.8" y="416.3" width="6.7" height="4" fill="#7c7c7c"/><rect x="1768.5" y="416.3" width="8.3" height="4" fill="#7c7c7c"/><path d="M1431.9 533.0 H1449.3 V545.5999999999999 M1481.3 533.0 H1464.5 V545.5999999999999 M1431.9 586.5999999999999 H1449.3 V574.0999999999999 M1481.3 586.5999999999999 H1464.5 V574.0999999999999 M1431.9 560.2 H1436.3 M1477.1 560.2 H1481.3" stroke="#3a3a3a" stroke-width="1.3" fill="none"/><rect x="1408.30" y="523.90" width="23.60" height="18.10" rx="0.8" fill="#8dc1e7" stroke="#3a3a3a" stroke-width="1.3"/><rect x="1408.30" y="551.40" width="23.60" height="17.60" rx="0.8" fill="#8dc1e7" stroke="#3a3a3a" stroke-width="1.3"/><rect x="1408.30" y="577.80" width="23.60" height="17.90" rx="0.8" fill="#8dc1e7" stroke="#3a3a3a" stroke-width="1.3"/><rect x="1481.30" y="523.90" width="24.00" height="18.10" rx="0.8" fill="#8dc1e7" stroke="#3a3a3a" stroke-width="1.3"/><rect x="1481.30" y="551.40" width="24.00" height="17.60" rx="0.8" fill="#8dc1e7" stroke="#3a3a3a" stroke-width="1.3"/><rect x="1481.30" y="577.80" width="24.00" height="17.90" rx="0.8" fill="#8dc1e7" stroke="#3a3a3a" stroke-width="1.3"/><rect x="1436.30" y="545.60" width="40.80" height="28.50" rx="0.8" fill="#8dc1e7" stroke="#3a3a3a" stroke-width="1.3"/><path d="M1593.5 548.7 V562.8 M1557 562.8 V556.2 H1630.3 V562.8 M1556.9 579 V595.4 M1545 595.4 V586 H1568.5 V595.4 M1593.4 579 V595.4 M1578.9 595.4 V586 H1607.5 V595.4 M1630.2 579 V595.4 M1617.7 595.4 V586 H1641.5 V595.4" stroke="#444" stroke-width="1.3" fill="none"/><rect x="1571.30" y="524.30" width="44.30" height="24.40" rx="0.8" fill="#8dc1e7" stroke="#3a3a3a" stroke-width="1.3"/><rect x="1544.80" y="562.80" width="24.10" height="16.20" rx="0.8" fill="#8dc1e7" stroke="#3a3a3a" stroke-width="1.3"/><rect x="1581.30" y="562.80" width="24.10" height="16.20" rx="0.8" fill="#8dc1e7" stroke="#3a3a3a" stroke-width="1.3"/><rect x="1618.00" y="562.80" width="24.30" height="16.20" rx="0.8" fill="#8dc1e7" stroke="#3a3a3a" stroke-width="1.3"/><path d="M1732.8 559.5 H1752.1 M1752.1 533.9 H1740.3 V585.6 H1752.1" stroke="#444" stroke-width="1.3" fill="none"/><rect x="1682.10" y="543.90" width="50.70" height="31.50" rx="0.8" fill="#8dc1e7" stroke="#3a3a3a" stroke-width="1.3"/><rect x="1752.10" y="524.30" width="27.60" height="19.10" rx="0.8" fill="#8dc1e7" stroke="#3a3a3a" stroke-width="1.3"/><rect x="1752.10" y="549.50" width="27.60" height="20.20" rx="0.8" fill="#8dc1e7" stroke="#3a3a3a" stroke-width="1.3"/><rect x="1752.10" y="575.90" width="27.60" height="19.50" rx="0.8" fill="#8dc1e7" stroke="#3a3a3a" stroke-width="1.3"/></svg>
<svg style="position:absolute;left:1368px;top:314px;" width="18" height="33" viewBox="0 0 18 33"><path d="M12.5 3.5 L3.5 16.5 L12.5 29.5" stroke="#ababab" stroke-width="2.2" fill="none" stroke-linecap="round"/></svg>
<svg style="position:absolute;left:1805px;top:314px;" width="18" height="33" viewBox="0 0 18 33"><path d="M4.5 3.5 L13.5 16.5 L4.5 29.5" stroke="#ababab" stroke-width="2.2" fill="none" stroke-linecap="round"/></svg>
<svg style="position:absolute;left:1368px;top:544px;" width="20" height="33" viewBox="0 0 20 33"><path d="M15 4 L4 17 L15 30" stroke="#ababab" stroke-width="2.4" fill="none" stroke-linecap="round"/></svg>
<svg style="position:absolute;left:1805px;top:544px;" width="20" height="33" viewBox="0 0 20 33"><path d="M4 4 L15 17 L4 30" stroke="#6a6a6a" stroke-width="2.4" fill="none" stroke-linecap="round"/></svg>
<div style="position:absolute;top:471.50px;font-size:23.2px;line-height:25.91px;color:#1c1c1c;font-weight:700;white-space:pre;font-family:'Liberation Sans', sans-serif;left:1395.50px;">Layouts</div>
<div style="position:absolute;left:1388px;top:624.1px;width:417.5px;height:1.3px;background:#e1e1e1;"></div>
<div style="position:absolute;left:1388px;top:747.1999999999999px;width:417.5px;height:1.3px;background:#e1e1e1;"></div>
<div style="position:absolute;left:1388px;top:862.4px;width:417.5px;height:1.3px;background:#e1e1e1;"></div>
<div style="position:absolute;left:1388px;top:1036.6000000000001px;width:417.5px;height:1.3px;background:#e1e1e1;"></div>
<div style="position:absolute;left:1388px;top:1303.3000000000002px;width:417.5px;height:1.3px;background:#e1e1e1;"></div>
<div style="position:absolute;top:644.94px;font-size:23.6px;line-height:26.36px;color:#1c1c1c;font-weight:700;white-space:pre;font-family:'Liberation Sans', sans-serif;left:1395.50px;">Document Type</div>
<div style="position:absolute;left:1395.4px;top:692.5px;width:23.4px;height:23.9px;box-sizing:border-box;background:#fff;border:1px solid #d6d4d0;border-radius:5px;box-shadow:0 0.5px 1px rgba(0,0,0,0.08);"></div>
<div style="position:absolute;top:692.21px;font-size:23.3px;line-height:26.03px;color:#262626;font-weight:400;white-space:pre;font-family:'Liberation Sans', sans-serif;left:1430.50px;">Gantt mode...</div>
<div style="position:absolute;top:767.93px;font-size:23.5px;line-height:26.25px;color:#1c1c1c;font-weight:700;white-space:pre;font-family:'Liberation Sans', sans-serif;left:1395.50px;">Project</div>
<div style="position:absolute;left:1531.8px;top:802.9px;width:266.5px;height:35.1px;box-sizing:border-box;background:#fff;border-radius:8px;box-shadow:0 0 0 0.6px rgba(0,0,0,0.12),0 1px 1.5px rgba(0,0,0,0.22);"></div>
<svg style="position:absolute;left:1549px;top:810px;" width="26" height="20" viewBox="0 0 26 20"><g fill="#3a3a3a"><circle cx="8" cy="5.6" r="2.9"/><circle cx="17.2" cy="5.6" r="2.9"/><path d="M2.3 17 Q2.8 10.2 8 10.2 Q11 10.2 12.3 12.5 Q10.5 14 10.2 17 Z"/><path d="M10.8 17 Q11.3 10.2 17.2 10.2 Q23 10.2 23.5 17 Z"/></g></svg>
<div style="position:absolute;top:806.78px;font-size:23px;line-height:25.69px;color:#262626;font-weight:400;white-space:pre;font-family:'Liberation Sans', sans-serif;left:1182.20px;width:1000px;text-align:center;">Resources...</div>
<div style="position:absolute;top:883.63px;font-size:23.5px;line-height:26.25px;color:#1c1c1c;font-weight:700;white-space:pre;font-family:'Liberation Sans', sans-serif;left:1395.50px;">Numbering</div>
<div style="position:absolute;left:1396.6px;top:934.4px;width:399.4px;height:35.8px;box-sizing:border-box;background:#fff;border-radius:8px;box-shadow:0 0 0 0.6px rgba(0,0,0,0.12),0 1px 1.5px rgba(0,0,0,0.22);"></div>
<div style="position:absolute;top:937.16px;font-size:23.8px;line-height:26.58px;color:#262626;font-weight:400;white-space:pre;font-family:'Liberation Sans', sans-serif;left:1411.00px;">No numbering scheme</div>
<div style="position:absolute;left:1765.1px;top:938.4px;width:27.7px;height:27.6px;background:#3b84f4;border-radius:6px;background-image:linear-gradient(#4a90f7,#2f78ee);"></div>
<svg style="position:absolute;left:1765.1px;top:938.4px;" width="28" height="28" viewBox="0 0 28 28"><path d="M9 11 L14 6 L19 11 M9 17 L14 22 L19 17" stroke="#fff" stroke-width="2.3" fill="none" stroke-linecap="round" stroke-linejoin="round"/></svg>
<div style="position:absolute;left:1395.4px;top:991.8px;width:23.4px;height:23.4px;box-sizing:border-box;background:#f6f5f3;border:1px solid #e4e2de;border-radius:5px;"></div>
<div style="position:absolute;top:990.31px;font-size:24.3px;line-height:27.14px;color:#b8b6b3;font-weight:400;white-space:pre;font-family:'Liberation Sans', sans-serif;left:1430.50px;">Start from central topic</div>
<div style="position:absolute;top:1056.64px;font-size:23.6px;line-height:26.36px;color:#1c1c1c;font-weight:700;white-space:pre;font-family:'Liberation Sans', sans-serif;left:1395.50px;">Document Info</div>
<div style="position:absolute;top:1104.50px;font-size:24.2px;line-height:27.03px;color:#262626;font-weight:400;white-space:pre;font-family:'Liberation Sans', sans-serif;left:1395.00px;">Modified</div>
<div style="position:absolute;top:1104.59px;font-size:24.1px;line-height:26.92px;color:#262626;font-weight:400;white-space:pre;font-family:'Liberation Sans', sans-serif;left:1523.50px;">25 Jul 2024 at 16:04</div>
<div style="position:absolute;top:1153.44px;font-size:23.6px;line-height:26.36px;color:#262626;font-weight:400;white-space:pre;font-family:'Liberation Sans', sans-serif;left:1395.00px;">Author</div>
<div style="position:absolute;left:1522.6px;top:1148.5px;width:274.2px;height:35.7px;background:#fff;box-shadow:0 0 0 0.5px rgba(0,0,0,0.1),0 1px 1px rgba(0,0,0,0.18);"></div>
<div style="position:absolute;top:1153.71px;font-size:23.3px;line-height:26.03px;color:#262626;font-weight:400;white-space:pre;font-family:'Liberation Sans', sans-serif;left:1528.50px;">Local WS Admin</div>
<div style="position:absolute;left:1522.6px;top:1201.1px;width:275.4px;height:35.7px;box-sizing:border-box;background:#fff;border-radius:8px;box-shadow:0 0 0 0.6px rgba(0,0,0,0.12),0 1px 1.5px rgba(0,0,0,0.22);"></div>
<div style="position:absolute;top:1203.84px;font-size:23.6px;line-height:26.36px;color:#262626;font-weight:400;white-space:pre;font-family:'Liberation Sans', sans-serif;left:1159.60px;width:1000px;text-align:center;">More Properties...</div>
<div style="position:absolute;left:1522.6px;top:1252.3px;width:275.4px;height:34.9px;box-sizing:border-box;background:#fff;border-radius:8px;box-shadow:0 0 0 0.6px rgba(0,0,0,0.12),0 1px 1.5px rgba(0,0,0,0.22);"></div>
<div style="position:absolute;top:1255.18px;font-size:24px;line-height:26.81px;color:#262626;font-weight:400;white-space:pre;font-family:'Liberation Sans', sans-serif;left:1159.50px;width:1000px;text-align:center;">Statistics...</div>
<div style="position:absolute;left:1828px;top:0px;width:1px;height:1318px;background:#fff;"></div>
<div style="position:absolute;left:0px;top:1316px;width:1830px;height:1px;background:#fff;"></div>
</div></div></body></html>
